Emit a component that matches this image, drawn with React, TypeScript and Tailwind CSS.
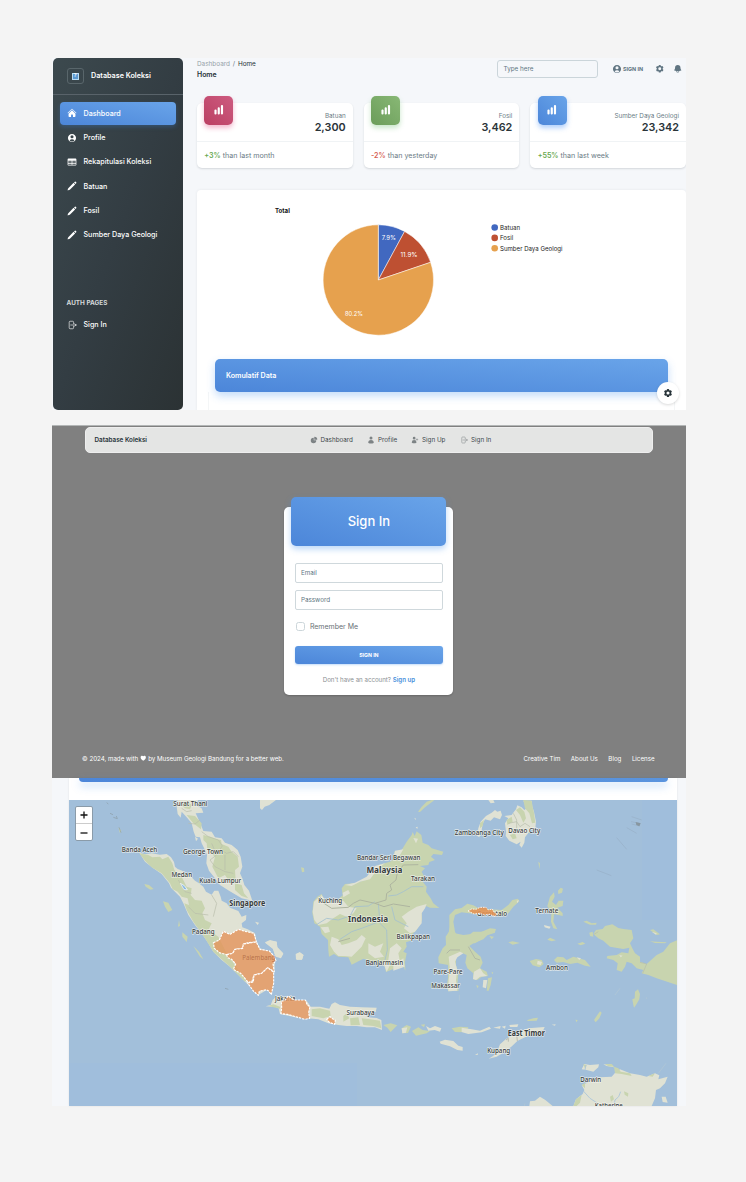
import type { ReactNode } from "react";
import {
  HiHome,
  HiUserCircle,
  HiTableCells,
  HiPencil,
  HiCog6Tooth,
  HiBell,
  HiChartBar,
  HiChartPie,
  HiUser,
  HiUserPlus,
  HiHeart,
  HiOutlineArrowRightOnRectangle,
} from "react-icons/hi2";

const WATER = "#a2bfda";
const LAND = "#e0e2d4";
const FOREST = "#c8d4af";

function NavItem({ icon, label, active }: { icon: ReactNode; label: string; active?: boolean }) {
  return (
    <div
      className={
        "flex h-[22.3px] w-[115.5px] items-center rounded-[4px] pl-[7px] text-[7.15px] font-medium text-white " +
        (active ? "bg-linear-to-tr from-[#4c86d9] to-[#69a4e9] shadow-[0_2px_4px_rgba(60,130,220,0.3)]" : "")
      }
    >
      <span className="mr-[6.5px] w-[10px] text-[10px]">{icon}</span>
      <span className="pt-[1.4px] whitespace-nowrap">{label}</span>
    </div>
  );
}

function Sidebar() {
  return (
    <aside className="h-[352px] w-[130px] rounded-[5px] bg-linear-to-br from-[#3c494e] via-[#333d43] to-[#2b3234]">
      <div className="flex h-[37px] items-center border-b border-[#59636a] pl-[14px]">
        <div className="flex size-[16.5px] items-center justify-center rounded-[3px] border border-[#59666b]">
          <div className="flex size-[7px] items-center justify-center border border-[#b9dcf3] bg-[#5b98cf] text-[5px] font-bold text-white">
            ?
          </div>
        </div>
        <span className="ml-[7.5px] text-[7.2px] font-semibold whitespace-nowrap text-white">Database Koleksi</span>
      </div>
      <nav className="flex flex-col gap-[2px] pt-[7.3px] pl-[7px]">
        <NavItem icon={<HiHome />} label="Dashboard" active />
        <NavItem icon={<HiUserCircle />} label="Profile" />
        <NavItem icon={<HiTableCells />} label="Rekapitulasi Koleksi" />
        <NavItem icon={<HiPencil />} label="Batuan" />
        <NavItem icon={<HiPencil />} label="Fosil" />
        <NavItem icon={<HiPencil />} label="Sumber Daya Geologi" />
      </nav>
      <div className="mt-[52px] pl-[13.5px] text-[6.4px] leading-[10px] font-bold text-[#d5d9da]">AUTH PAGES</div>
      <div className="pt-[5.5px] pl-[7px]">
        <NavItem icon={<HiOutlineArrowRightOnRectangle />} label="Sign In" />
      </div>
    </aside>
  );
}

function StatCard({
  tone,
  label,
  value,
  delta,
  deltaTone,
  note,
}: {
  tone: string;
  label: string;
  value: string;
  delta: string;
  deltaTone: string;
  note: string;
}) {
  return (
    <div className="relative h-[65px] flex-1 rounded-[5px] bg-white shadow-[0_1px_2px_rgba(40,50,60,0.16)]">
      <div
        className={
          "absolute -top-[7.3px] left-[7.3px] flex size-[29px] items-center justify-center rounded-[5px] text-[11.5px] text-white " +
          tone
        }
      >
        <HiChartBar />
      </div>
      <div className="flex h-[39px] flex-col items-end border-b border-[#f0f3f5] pt-[8.5px] pr-[7px]">
        <span className="text-[6.3px] leading-[9px] text-[#6b7c86]">{label}</span>
        <span className="text-[10.8px] leading-[14px] font-semibold text-[#2a3439]">{value}</span>
      </div>
      <div className="pt-[9px] pl-[7.3px] text-[7.12px] leading-[10px] whitespace-nowrap text-[#6a7b85]">
        <span className={"font-semibold " + deltaTone}>{delta}</span> {note}
      </div>
    </div>
  );
}

function PieChart() {
  return (
    <svg width="489" height="169" viewBox="197 190 489 169" className="block" fontFamily="Inter, sans-serif" fontSize="6.1">
      <text x="275" y="213.4" fontWeight="700" fill="#111">
        Total
      </text>
      <g stroke="#fff" strokeWidth=".5">
        <path d="M378.3 280 L378.3 224.8 A55.2 55.2 0 0 1 404.6 231.4 Z" fill="#4168c0" />
        <path d="M378.3 280 L404.6 231.4 A55.2 55.2 0 0 1 430.6 262.3 Z" fill="#be5032" />
        <path d="M378.3 280 L430.6 262.3 A55.2 55.2 0 1 1 378.3 224.8 Z" fill="#e6a14e" />
      </g>
      <g fill="#fff">
        <text x="381.8" y="239.8" textLength="14" lengthAdjust="spacingAndGlyphs">7.9%</text>
        <text x="400.5" y="256.6" textLength="17" lengthAdjust="spacingAndGlyphs">11.9%</text>
        <text x="345" y="315.8" textLength="18" lengthAdjust="spacingAndGlyphs">80.2%</text>
      </g>
      <circle cx="494.7" cy="227.5" r="3.3" fill="#4168c0" />
      <circle cx="494.7" cy="237.9" r="3.3" fill="#be5032" />
      <circle cx="494.7" cy="248.2" r="3.3" fill="#e6a14e" />
      <g fill="#222">
        <text x="500" y="229.8">Batuan</text>
        <text x="500" y="240.2">Fosil</text>
        <text x="500" y="250.5">Sumber Daya Geologi</text>
      </g>
    </svg>
  );
}

function DashboardPanel() {
  return (
    <section className="relative flex h-[352px] overflow-hidden bg-[#f5f7fa] pl-px">
      <Sidebar />
      <main className="ml-[14px] w-[489px] shrink-0">
        <header className="flex h-[38px] items-start text-[#607582]">
          <div className="w-[300px] text-[6.4px]">
            <div className="pt-[0.5px] leading-[10px] text-[#96a2a9]">
              Dashboard <span className="mx-px text-[#66747b]">/</span>{" "}
              <span className="text-[#263238]">Home</span>
            </div>
            <div className="text-[6.9px] leading-[11px] font-semibold text-[#263238]">Home</div>
          </div>
          <div className="mt-[2px] flex h-[18px] w-[101px] items-center rounded-[3px] border border-[#cbd5da] pt-[1.5px] pl-[5.5px] text-[6.3px]">
            Type here
          </div>
          <div className="mt-[2px] flex h-[18px] items-center pl-[14px]">
            <HiUserCircle className="text-[10px]" />
            <span className="ml-px w-[31.5px] text-[5.4px] font-bold whitespace-nowrap">SIGN IN</span>
            <HiCog6Tooth className="mr-[8.5px] text-[9.5px]" />
            <HiBell className="text-[9.5px]" />
          </div>
        </header>
        <div className="mt-[7px] flex gap-[11px]">
          <StatCard
            tone="bg-linear-to-tr from-[#bb3f63] to-[#cd5b80] shadow-[0_3px_5px_rgba(216,27,96,0.3)]"
            label="Batuan"
            value="2,300"
            delta="+3%"
            deltaTone="text-[#68a850]"
            note="than last month"
          />
          <StatCard
            tone="bg-linear-to-tr from-[#6b9d5a] to-[#88b875] shadow-[0_3px_5px_rgba(76,175,80,0.3)]"
            label="Fosil"
            value="3,462"
            delta="-2%"
            deltaTone="text-[#d65f54]"
            note="than yesterday"
          />
          <StatCard
            tone="bg-linear-to-tr from-[#4c86d9] to-[#69a4e9] shadow-[0_3px_5px_rgba(33,120,243,0.35)]"
            label="Sumber Daya Geologi"
            value="23,342"
            delta="+55%"
            deltaTone="text-[#68a850]"
            note="than last week"
          />
        </div>
        <div className="mt-[22px] h-[221px] rounded-t-[4px] bg-white shadow-[0_0_3px_rgba(40,50,60,0.08)]">
          <PieChart />
          <div className="relative mx-[18px] flex h-[33px] items-center rounded-[5px] bg-linear-to-tr from-[#4c86d9] to-[#69a4e9] pt-[1.5px] pl-[11px] text-[7.1px] font-semibold text-white shadow-[0_4px_8px_rgba(60,140,235,0.3)]">
            Komulatif Data
          </div>
          <div className="mx-[11px] h-[19px] border-x border-[#f4f6f7]" />
        </div>
      </main>
      <div className="absolute right-[7px] bottom-[6px] flex size-[22px] items-center justify-center rounded-full bg-white text-[10px] text-[#263238] shadow-[0_1px_3px_rgba(0,0,0,0.15)]">
        <HiCog6Tooth />
      </div>
    </section>
  );
}

function TopLink({ icon, label, width }: { icon: ReactNode; label: string; width: string }) {
  return (
    <span className={"flex shrink-0 items-center " + width}>
      <span className="mr-[3px] text-[8px] text-[#7d8385]">{icon}</span>
      <span className="pt-[2px] whitespace-nowrap">{label}</span>
    </span>
  );
}

function SignInPanel() {
  return (
    <section className="mt-[15px] flex h-[353px] flex-col border-t border-[#b3b6b6] bg-[#808080] px-[33px]">
      <div className="mt-px flex h-[26px] shrink-0 items-center rounded-[5px] border border-[#eeeeee] bg-[#e4e5e4] pl-[8.5px] text-[6.3px] text-[#3e484d]">
        <span className="w-[215px] pt-[2px] font-semibold text-[#263238]">Database Koleksi</span>
        <TopLink icon={<HiChartPie />} label="Dashboard" width="w-[57.5px]" />
        <TopLink icon={<HiUser />} label="Profile" width="w-[44px]" />
        <TopLink icon={<HiUserPlus />} label="Sign Up" width="w-[49px]" />
        <TopLink icon={<HiOutlineArrowRightOnRectangle />} label="Sign In" width="w-[40px]" />
      </div>
      <div className="mt-[54px] ml-[199.4px] flex h-[187.5px] w-[169px] shrink-0 flex-col rounded-[5px] bg-white px-[10.5px] shadow-[0_1px_2px_rgba(0,0,0,0.2)]">
        <div className="-mx-[3.5px] -mt-[10.5px] flex h-[49.5px] shrink-0 items-center justify-center rounded-[5px] bg-linear-to-tr from-[#4c86d9] to-[#69a4e9] text-[13px] font-medium text-white shadow-[0_3px_6px_rgba(60,140,235,0.35)]">
          Sign In
        </div>
        <div className="mt-[17px] flex h-[20px] shrink-0 items-center rounded-[2px] border border-[#cfd8dc] pt-[1.5px] pl-[5px] text-[6.3px] text-[#607582]">
          Email
        </div>
        <div className="mt-[6.5px] flex h-[20px] shrink-0 items-center rounded-[2px] border border-[#cfd8dc] pt-[1.5px] pl-[5px] text-[6.3px] text-[#607582]">
          Password
        </div>
        <div className="mt-[11.5px] flex h-[10px] items-center pl-px text-[7px] text-[#687075]">
          <span className="mr-[5px] size-[9px] rounded-[2.5px] border border-[#ccd6da]" />
          <span className="pt-[1.5px]">Remember Me</span>
        </div>
        <div className="mt-[15px] flex h-[17.5px] shrink-0 items-center justify-center rounded-[3px] bg-linear-to-tr from-[#4c86d9] to-[#69a4e9] pt-[1.5px] text-[5.2px] font-bold text-white shadow-[0_1px_2px_rgba(60,140,235,0.3)]">
          SIGN IN
        </div>
        <div className="mt-[11px] text-center text-[6.15px] leading-[10px] whitespace-nowrap text-[#8b9093]">
          Don't have an account? <span className="font-semibold text-[#4a90dc]">Sign up</span>
        </div>
      </div>
      <footer className="mt-[59px] -ml-[3px] flex h-[10px] items-center justify-between text-[6.18px] whitespace-nowrap text-white">
        <span>
          © 2024, made with <HiHeart className="-mt-[1.5px] inline-block align-middle text-[6.5px]" /> by Museum Geologi
          Bandung for a better web.
        </span>
        <span className="-mr-[1.5px] flex gap-[10.5px]">
          <span>Creative Tim</span>
          <span>About Us</span>
          <span>Blog</span>
          <span>License</span>
        </span>
      </footer>
    </section>
  );
}

type Place = { x: number; y: number; name: string; w: number; bold?: boolean };

const places: Place[] = [
  { x: 190.3, y: 806, name: "Surat Thani", w: 34 },
  { x: 139.5, y: 852, name: "Banda Aceh", w: 35.5 },
  { x: 203, y: 853.5, name: "George Town", w: 40 },
  { x: 181.8, y: 877, name: "Medan", w: 20.5 },
  { x: 220.2, y: 882.5, name: "Kuala Lumpur", w: 42 },
  { x: 247.3, y: 905.5, name: "Singapore", w: 36, bold: true },
  { x: 203.3, y: 934, name: "Padang", w: 22.5 },
  { x: 388.7, y: 860.2, name: "Bandar Seri Begawan", w: 63.5 },
  { x: 384.4, y: 873, name: "Malaysia", w: 36, bold: true },
  { x: 423, y: 880.5, name: "Tarakan", w: 24 },
  { x: 330.2, y: 903, name: "Kuching", w: 24 },
  { x: 368, y: 921.5, name: "Indonesia", w: 40, bold: true },
  { x: 413.2, y: 938.5, name: "Balikpapan", w: 33.5 },
  { x: 384.4, y: 964.8, name: "Banjarmasin", w: 37.5 },
  { x: 479.3, y: 834.8, name: "Zamboanga City", w: 49 },
  { x: 524.3, y: 832.5, name: "Davao City", w: 32 },
  { x: 546.8, y: 912.5, name: "Ternate", w: 23 },
  { x: 557, y: 969.8, name: "Ambon", w: 22 },
  { x: 448, y: 973.5, name: "Pare-Pare", w: 29 },
  { x: 445.6, y: 988, name: "Makassar", w: 28.5 },
  { x: 360.5, y: 1015, name: "Surabaya", w: 28 },
  { x: 526.3, y: 1036, name: "East Timor", w: 37, bold: true },
  { x: 498.7, y: 1052.5, name: "Kupang", w: 23 },
  { x: 590.7, y: 1082.3, name: "Darwin", w: 21 },
  { x: 608.8, y: 1108.3, name: "Katherine", w: 28 },
];

function Label({ x, y, name, w, bold }: Place) {
  return (
    <text
      x={x}
      y={y}
      textAnchor="middle"
      textLength={w}
      lengthAdjust="spacingAndGlyphs"
      fontSize={bold ? 8 : 7}
      fontWeight={bold ? 700 : 500}
      fill="#373c40"
      stroke="#f3f4ef"
      strokeOpacity=".75"
      strokeWidth="1.5"
      strokeLinejoin="round"
      paintOrder="stroke"
    >
      {name}
    </text>
  );
}

function RegionMap() {
  return (
    <svg width="608" height="306" viewBox="69 800 608 306" className="block" fontFamily="'Noto Sans', sans-serif">
      <rect x="69" y="800" width="608" height="306" fill={WATER} />
      <path d="M642 800h36v120h-36zM69 1063h288v43h-288z" fill="#a0bedc" />

      {/* Sumatra and the Malay peninsula */}
      <g transform="translate(45 740) scale(.33333)">
        <path
          fill={LAND}
          d="M283 338 300 343 320 340 345 344 365 342 378 352 387 366 390 380 398 387 412 392 425 402 440 412 450 422 462 430 475 440 483 455 500 464 508 452 520 452 527 470 530 482 545 490 555 503 580 513 590 530 604 525 603 540 590 550 592 562 608 568 630 580 635 605 645 625 675 635 690 655 688 690 685 725 680 760 665 750 640 765 605 730 575 700 555 680 530 660 505 635 490 610 470 580 450 555 430 525 415 490 405 470 390 455 378 443 372 430 350 402 325 385 300 365Z"
        />
        <path
          fill={FOREST}
          d="M283 340 310 345 322 352 345 350 352 358 370 350 382 370 388 390 410 410 425 440 440 445 437 465 450 480 470 482 480 505 472 520 480 540 500 550 490 570 520 590 545 640 580 690 605 720 600 725 555 680 505 635 480 595 445 545 425 510 418 490 432 495 428 475 410 470 398 455 383 448 375 430 350 400 320 382 300 362Z"
        />
        <path
          fill={LAND}
          d="M397 180 395 200 398 222 407 233 410 215 425 232 440 250 446 275 452 290 465 292 470 310 480 330 486 345 484 370 492 392 510 415 525 435 552 452 590 475 622 482 612 452 598 435 592 415 585 400 592 380 587 350 578 330 560 315 540 308 530 295 510 292 500 275 475 273 466 250 452 220 475 218 470 205 452 195 460 180Z"
        />
        <path
          fill={FOREST}
          d="M475 285 495 290 515 298 528 300 530 312 550 320 560 335 578 350 582 380 570 390 572 420 560 435 540 405 520 415 502 380 510 350 487 330 485 310 475 300ZM410 195 425 185 440 195 435 208 420 205ZM425 225 450 228 470 250 468 268 445 250ZM570 430 590 435 597 460 610 475 590 468 570 450Z"
        />
        <path
          d="M410 205 425 215 440 212M430 250 450 252 465 240M470 275 490 290 520 300 532 318 525 328 545 340 565 335 580 350M500 310 515 345 495 360 510 380 540 395 565 400M540 345 540 390M400 420 420 455 440 460M430 500 450 520 490 525M500 465 515 490 505 530"
          fill="none"
          stroke="#b8bcaa"
          strokeWidth="2"
        />
        <path d="M406 430 418 437 427 449 417 449Z" fill="#8bb9e2" stroke="#fff" strokeWidth="2" />
        <path
          fill={FOREST}
          d="M298 432 312 435 326 447 316 449 302 440ZM354 484 370 488 382 510 370 516 360 500ZM402 540 405 558 399 560ZM412 577 428 590 425 606 412 590ZM445 618 462 635 475 658 465 650ZM220 262 229 272 225 280Z"
        />
        <path
          fill={LAND}
          d="M450 290 459 296 453 304ZM540 505 570 512 575 525 555 520ZM555 540 575 535 580 550 560 550ZM630 545 642 548 638 555ZM660 608 675 602 695 605 697 622 715 640 708 655 692 650 685 628ZM753 643 763 637 775 645 772 658 755 660Z"
        />
        <path
          d="M195 220 204 224M205 232 217 236 214 228M185 188 190 192M222 262 228 278M540 745 550 748"
          stroke="#8b9ba5"
          strokeWidth="2"
          fill="none"
        />
      </g>

      {/* Borneo */}
      <g transform="translate(260 780) scale(.33333)">
        <path
          fill={FOREST}
          d="M455 165 458 156 464 168 470 154 484 165 488 188 505 195 515 205 550 215 546 225 520 222 513 230 525 240 508 246 505 255 480 258 495 265 485 275 493 290 484 300 500 320 498 335 512 355 520 370 538 384 510 383 498 378 485 395 486 420 470 450 455 465 452 482 438 487 440 500 430 515 440 520 435 545 436 572 429 555 378 576 374 558 350 545 330 542 310 536 275 554 265 532 235 530 222 522 207 530 205 510 204 480 185 462 180 440 163 430 157 400 160 365 172 350 185 342 192 357 225 366 248 346 245 325 255 312 285 310 315 300 330 285 355 255 390 245 405 235 403 215 425 210 440 185Z"
        />
        <path
          fill={LAND}
          d="M460 174 474 176 468 190ZM405 212 430 208 420 225 400 235ZM255 315 275 318 300 305 330 298 355 265 375 250 345 258 320 290 285 308ZM248 338 265 330 270 340 250 352ZM162 365 185 345 195 360 225 370 250 362 265 380 290 385 280 400 260 410 240 402 220 415 200 430 175 435 163 420 158 395ZM182 442 205 440 210 455 195 460ZM215 470 235 478 245 495 265 490 290 480 305 465 317 475 305 500 290 515 275 530 255 528 235 528 222 515 210 495ZM325 490 345 500 370 490 360 515 372 530 345 535 325 520ZM470 380 500 372 495 385 485 400 485 430 465 455 450 460 432 445 440 430 425 410 445 395ZM390 505 410 490 425 505 415 520 420 545 395 545 380 575 370 550 385 540ZM400 555 430 535 434 560 400 572Z"
        />
        <path
          d="M168 435 200 415 235 420 270 408 285 380 325 378 345 365M385 348 410 345 430 335 455 320 490 320M355 370 360 430 380 450 382 510 375 540M395 380 405 420 445 440M240 478 275 455 305 445 350 428"
          fill="none"
          stroke="#a3c1cf"
          strokeWidth="2.5"
        />
        <path
          d="M180 350 192 370 215 385 265 382 280 370 300 360 345 370 378 360 380 340 395 330 390 315 408 300 412 278 430 255 475 254M345 370 372 380 400 372 450 380M270 475 235 485"
          fill="none"
          stroke="#aeb5a0"
          strokeWidth="3"
        />
        <path fill={FOREST} d="M474 95 485 80 500 65 515 60 523 61 495 82 480 96ZM123 262 132 264 133 275 126 277Z" />
        <path fill={LAND} d="M0 60 48 60 28 75 14 80 6 90 0 85ZM463 113 468 116 466 120ZM467 142 473 140 472 147ZM15 487 30 480 50 485 52 502 70 522 62 533 45 526 38 505ZM107 522 120 517 131 525 125 540 108 538Z" />
      </g>

      {/* Sulawesi north arm, Maluku, Papua and Mindanao */}
      <g transform="translate(470 780) scale(.33333)">
        <path
          fill={FOREST}
          d="M-62 405-45 388-25 384-8 371 10 376 30 387 60 388 95 390 115 375 127 360 144 356 148 364 130 380 115 400 95 407 60 402 20 403-25 397-45 405-50 425-45 455-35 475-65 475-62 440Z"
        />
        <path
          fill={FOREST}
          d="M-60 450-40 470-10 470 10 455 35 455 60 445 78 447 75 456 50 460 40 475 15 490-10 490ZM240 350 252 337 254 350 246 365 258 375 266 362 280 362 278 378 262 383 278 400 278 408 252 402 250 425 262 448 250 445 243 425 244 400 232 378ZM264 332 272 323 279 326 276 338 265 342ZM115 487 128 484 150 489 128 494ZM232 479 240 473 258 481 245 484ZM322 491 338 486 346 491 332 496ZM179 543 198 537 215 540 221 552 208 562 188 556ZM252 540 262 530 280 532 290 540 310 530 345 540 362 560 345 557 322 548 300 552 280 546 260 548ZM358 458 368 455 370 470 360 468ZM340 425 350 422 365 430 380 428 378 434 360 434ZM370 462 378 450 398 447 405 438 427 433 445 444 460 447 485 450 490 475 480 490 487 505 495 520 510 530 510 545 530 552 560 525 580 515 600 490 622 480 622 615 560 595 535 585 515 580 520 570 500 565 485 550 470 545 465 560 455 575 440 570 443 550 430 540 410 535 412 528 440 525 455 517 475 520 478 503 460 507 420 500 400 482 385 475ZM540 484 560 485 590 487 585 490 555 489ZM540 450 550 448 570 463 560 465ZM205 245 210 250 208 268ZM158 280 163 290"
        />
        <path
          fill={LAND}
          d="M22 168 25 145 32 125 48 108 65 98 75 90 82 95 92 92 96 105 90 118 72 112 62 122 45 118 38 132 35 150 28 172ZM108 155 105 130 115 115 103 108 125 105 132 95 138 88 142 76 155 82 163 90 170 85 160 62 185 62 187 80 192 95 198 125 196 145 182 150 165 172 163 188 155 203 148 195 152 185 140 193 118 182 107 168ZM55 60 70 60 74 68 62 70Z"
        />
        <path fill={FOREST} d="M160 60 185 62 188 82 192 98 196 128 186 130 178 100 165 85ZM138 90 150 82 163 95 168 115 160 128 150 105ZM110 120 125 110 128 125 112 135ZM120 165 135 160 140 175 128 178ZM30 130 42 120 38 138 30 145Z" />
        <path d="M115 130 140 125 150 140 165 130 180 140M130 100 140 120 140 150M510 547 530 552 518 580M372 463 385 455" stroke="#b7bcaa" strokeWidth="2" fill="none" />
        <path fill={LAND} d="M203 542 216 546 212 555 201 553ZM320 532 333 535 328 540ZM448 525 458 527 452 532ZM222 435 242 440 238 446 224 442ZM545 455 560 460 558 464ZM140 362 147 361 142 370Z" />
        <path d="M483 125 510 130 508 138 485 132M485 110 515 120M470 143 500 160M440 173 470 208M380 270 424 287" stroke="#93abc0" strokeWidth="1.5" fill="none" />
        <path d="M497 126 512 130 508 139 499 135Z" fill="#8796a0" />
      </g>

      {/* Sulawesi body, Nusa Tenggara, Timor and northern Australia */}
      <g transform="translate(400 930) scale(.33333)">
        <path
          fill={FOREST}
          d="M150 0 165 10 190 15 215 12 240 6 285 0 285 8 262 16 250 28 220 40 208 48 225 65 242 80 248 98 240 115 260 125 264 138 245 140 232 150 219 148 220 130 202 115 196 98 200 75 185 68 168 85 168 105 175 130 172 165 176 182 145 184 140 170 144 145 144 105 116 100 115 82 128 55 138 45 137 20Z"
        />
        <path fill={LAND} d="M146 80 165 72 180 65 190 70 172 82 165 95 172 120 168 150 172 182 145 184 146 150 150 120ZM222 125 240 115 250 130 262 138 240 140 228 150 219 147ZM250 150 262 150 258 175 248 172Z" />
        <path fill={FOREST} d="M264 145 276 142 272 165 266 182 260 182ZM275 125 280 128 276 133ZM229 165 236 168 232 175ZM268 18 282 20 275 28ZM700 225 697 208 704 205 705 185 714 178 720 192 718 208 708 225 702 233ZM582 270 592 255 600 244 605 248 598 265 587 277ZM526 269 533 270 530 277ZM380 271 400 265 414 263 410 272 385 273Z" />
        <path
          fill={FOREST}
          d="M5 295 20 285 33 290 24 309 7 310ZM36 303 55 292 68 300 90 303 80 310 48 317ZM155 295 180 290 205 292 200 307 165 306ZM62 284 75 283 72 292Z"
        />
        <path
          fill={LAND}
          d="M5 295 22 292 18 308 7 310ZM78 288 90 295 105 288 124 295 120 305 104 300 85 302ZM185 293 215 298 240 302 268 290 273 296 245 307 205 312 185 306ZM280 293 292 290 302 288 300 296ZM305 290 317 287 315 296ZM328 285 355 283 352 291 330 291ZM119 335 135 329 160 333 175 347 188 351 188 362 172 360 150 349 122 341ZM225 374 234 370 233 375ZM266 386 278 379 290 369 300 343 318 327 350 308 385 295 434 291 430 300 405 310 375 322 352 333 334 350 310 368 290 380ZM455 284 467 283 465 287Z"
        />
        <path
          fill={LAND}
          d="M388 528 390 514 405 512 420 500 436 510 458 528ZM520 528 528 508 548 492 553 480 545 465 570 455 575 445 600 442 635 440 648 425 660 418 690 430 720 435 740 440 765 430 778 436 775 448 803 440 795 460 780 475 768 480 765 505 755 528ZM545 418 553 402 570 405 597 403 595 412 580 425 560 420ZM610 403 635 404 642 412 620 408ZM785 500 797 500 803 518 788 516Z"
        />
        <path fill={FOREST} d="M642 410 655 415 662 425 690 430 695 438 665 432 645 430ZM520 528 528 508 545 495 540 518 530 528ZM615 402 635 402 643 410 625 409ZM745 438 765 430 758 440ZM550 402 560 406 555 416ZM630 500 638 495 642 508 633 515ZM672 484 685 490 684 500 674 494ZM545 465 555 458 555 475Z" />
        <path d="M550 483 570 505 590 518M662 485 656 500 645 510 642 528M558 405 555 420" stroke="#a9c4da" strokeWidth="2.5" fill="none" />
        <path d="M178 194 178 212M660 175 645 195M798 400 775 430M740 202 740 207M375 520 373 528" stroke="#b9cad3" strokeWidth="1.5" fill="none" />
        <path d="M318 330 325 325 325 335M350 315 352 333M140 70 150 60 180 60M205 50 225 85 240 90" stroke="#a6aaa0" strokeWidth="2" fill="none" />
      </g>

      {/* Java and Bali */}
      <g transform="translate(180 890) scale(.33333)">
        <path
          fill={LAND}
          d="M257 349 272 345 278 330 290 318 310 322 330 318 350 330 380 332 392 350 420 350 448 356 455 342 465 337 480 345 510 350 545 352 590 353 587 366 555 370 562 382 590 384 604 390 606 420 585 412 560 412 530 408 500 408 475 405 445 400 415 388 385 385 345 382 300 372 295 352Z"
        />
        <path
          fill={FOREST}
          d="M265 348 280 343 300 350 300 356ZM395 358 420 355 450 362 452 378 430 385 395 378ZM490 378 500 370 508 385 490 395ZM510 385 535 382 540 405 512 406ZM545 385 570 388 600 392 604 415 580 408 550 405ZM610 405 632 400 652 406 640 418 632 426 622 413Z"
        />
      </g>

      {places.map((p) => (
        <Label key={p.name} {...p} />
      ))}
      <Label x={285.3} y={1001.3} name="Jakarta" w={20.5} />
      <Label x={492} y={915.5} name="Gorontalo" w={30} />

      {/* Highlighted provinces */}
      <g
        transform="translate(180 890) scale(.33333)"
        fill="#e4945a"
        fillOpacity=".8"
        stroke="#fff"
        strokeWidth="3.4"
        strokeDasharray="7 3"
        strokeLinejoin="round"
      >
        <path d="M100 158 118 150 130 124 150 133 175 118 195 124 222 130 229 156 205 158 190 162 188 175 165 178 158 190 140 194 118 188 103 175Z" />
        <path d="M140 194 158 190 165 178 188 175 190 162 229 156 240 178 268 183 282 198 288 212 279 222 283 245 263 233 245 250 222 255 215 277 203 275 182 250 160 238 167 222 155 208 143 203Z" />
        <path d="M203 279 220 276 222 255 245 250 263 233 281 247 281 280 274 314 266 303 258 299 238 304 235 316 220 303Z" />
        <path d="M304 334 316 330 324 318 342 330 376 330 382 345 390 350 386 368 389 385 374 388 340 378 322 373 303 371 305 352Z" />
        <path d="M440 388 450 380 460 388 466 391 464 403 448 397Z" />
      </g>
      <g transform="translate(470 780) scale(.33333)" fill="#e29355" fillOpacity=".9" stroke="#fff" strokeWidth="2.5" strokeDasharray="5 3">
        <path d="M-6 393 5 387 18 388 30 382 48 382 55 390 67 387 72 397 82 402 74 409 58 403 42 405 30 400 12 402Z" />
      </g>
      <text x="258.8" y="960.4" textAnchor="middle" textLength="33" lengthAdjust="spacingAndGlyphs" fontSize="7" fill="#b06a43" fillOpacity=".85">
        Palembang
      </text>
    </svg>
  );
}

function MapPanel() {
  return (
    <section className="h-[328px] bg-[#f5f7fa] pl-[17px]">
      <div className="relative w-[608px] bg-white shadow-[0_0_2px_rgba(40,50,60,0.1)]">
        <div className="flex h-[22px] pl-[9.5px]">
          <div className="h-[4px] w-[589px] rounded-b-[5px] bg-linear-to-r from-[#4c86d9] to-[#5a94de] shadow-[0_4px_8px_rgba(60,140,235,0.35)]" />
        </div>
        <RegionMap />
        <div className="absolute top-[28px] left-[6px] flex w-[18px] flex-col items-center rounded-[2px] border border-[#8a9ba9] bg-white text-[#222]">
          <div className="flex h-[17px] w-full items-center justify-center border-b border-[#ccc]">
            <svg width="8" height="8" viewBox="0 0 8 8" stroke="#111" strokeWidth="1.3">
              <path d="M.5 4h7M4 .5v7" />
            </svg>
          </div>
          <div className="flex h-[16px] w-full items-center justify-center pt-px">
            <svg width="8" height="8" viewBox="0 0 8 8" stroke="#111" strokeWidth="1.3">
              <path d="M.5 4h7" />
            </svg>
          </div>
        </div>
      </div>
    </section>
  );
}

export default function App() {
  return (
    <div className="h-[1182px] w-[746px] overflow-hidden bg-[#f4f4f4] pt-[58px] pl-[52px] font-['Inter',sans-serif] leading-normal">
      <div className="w-[634px]">
        <DashboardPanel />
        <SignInPanel />
        <MapPanel />
      </div>
    </div>
  );
}
